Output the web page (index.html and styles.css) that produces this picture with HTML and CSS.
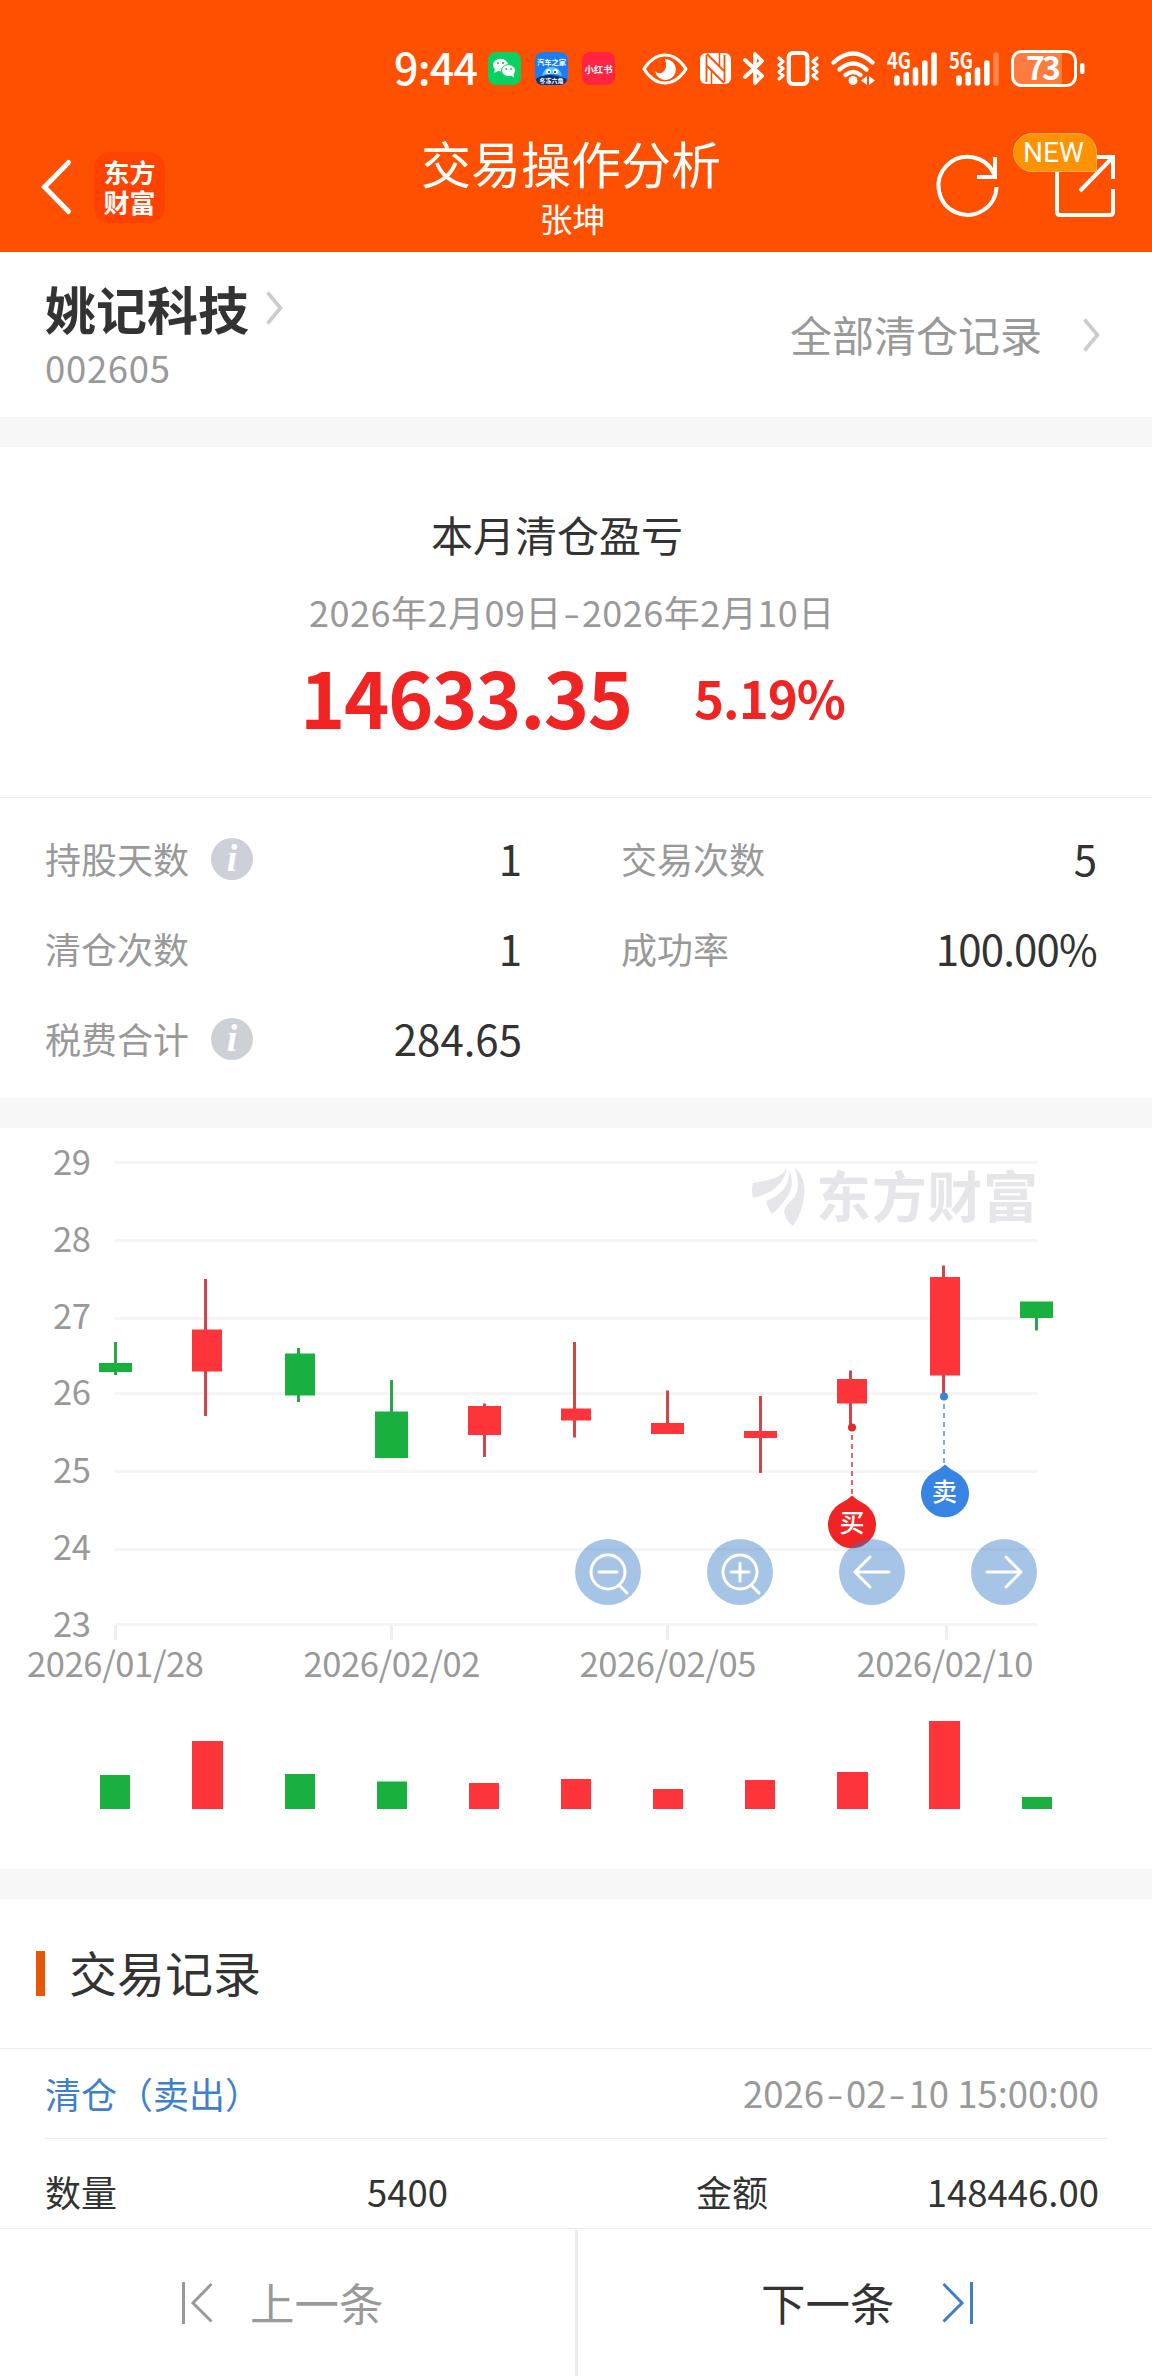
FILE: index.html
```
<!DOCTYPE html>
<html lang="zh-CN">
<head>
  <meta charset="UTF-8" />
  <meta name="viewport" content="width=device-width, initial-scale=1.0"/>
  <title>交易操作分析</title>
  <link rel="stylesheet" href="styles.css">
</head>
<body>

  <header class="header">
    <div class="status-bar">
      <span class="clock">9:44</span>

      <svg class="app-icon" width="33" height="33" viewBox="0 0 33 33">
        <rect width="33" height="33" rx="8" fill="#07d160"/>
        <ellipse cx="12.5" cy="13" rx="7.5" ry="6.3" fill="#fff"/>
        <path d="M7 17l-1 4 4-2z" fill="#fff"/>
        <ellipse cx="20.5" cy="18.6" rx="7" ry="6" fill="#fff" stroke="#07d160"/>
        <path d="M23 23.500l3 2-.5-4z" fill="#fff"/>
        <g fill="#07c160"><circle cx="10" cy="11" r="1"/><circle cx="15" cy="11" r="1"/><circle cx="18.300" cy="17" r=".9"/><circle cx="23" cy="17" r=".9"/></g>
      </svg>

      <svg class="app-icon" width="33" height="33" viewBox="0 0 33 33">
        <rect width="33" height="33" rx="8" fill="#1c7df2"/>
        <path d="M1 27q7-5 15-4t16 4v-1q0 7-8 7H9q-8 0-8-6z" fill="#10306e"/>
        <path d="M7 24q2-9 10-9t10 9q-10-4-20 0z" fill="#62c8fa"/>
        <circle cx="13.500" cy="19.500" r="2.500" fill="#fff"/><circle cx="20.500" cy="19.500" r="2.500" fill="#fff"/>
        <circle cx="14" cy="20" r="1.100" fill="#10306e"/><circle cx="20" cy="20" r="1.100" fill="#10306e"/>
        <text x="16.500" y="12.500" class="app-text" font-size="7.300">汽车之家</text>
        <text x="16.500" y="31" class="app-text" font-size="6">冬冻六角</text>
      </svg>

      <svg class="app-icon" width="33" height="33" viewBox="0 0 33 33">
        <rect width="33" height="33" rx="8" fill="#ff2442"/>
        <text x="16.500" y="20.500" class="app-text" font-size="9.300">小红书</text>
      </svg>

      <!-- eye comfort -->
      <svg class="eye" width="46" height="32" viewBox="0 0 46 32">
        <path d="M2 16Q11 2 23 2t21 14Q35 30 23 30T2 16z" fill="none" stroke="#fff" stroke-width="3.200" stroke-linejoin="round"/>
        <path d="M23 6a10.500 10.500 0 1 1-10 12q4 4 8 1 5-4 2-13z" fill="#fff"/>
      </svg>

      <!-- nfc -->
      <svg class="nfc" width="31" height="31" viewBox="0 0 31 31">
        <rect width="31" height="31" rx="6" fill="#fff"/>
        <path d="M6.500 2v27M24.500 2v27" stroke="#ff5000" stroke-width="1.800"/>
        <path d="M7 1l17 17M7 13l17 17" fill="none" stroke="#ff5000" stroke-width="1.800"/>
        <path d="M11.500 17v14M19.500 0v14" stroke="#ff5000" stroke-width="1.500"/>
      </svg>

      <svg class="bluetooth" width="22" height="35" viewBox="0 0 22 35">
        <path d="M2 9l17 16-7 7V3l7 7L2 26" fill="none" stroke="#fff" stroke-width="3.800" stroke-linecap="round" stroke-linejoin="round"/>
      </svg>

      <svg class="vibrate" width="42" height="35" viewBox="0 0 42 35">
        <rect x="11.800" y="2" width="18.500" height="31" rx="4" fill="none" stroke="#fff" stroke-width="4.200"/>
        <path d="M2 7l4 3.500-4 3.500 4 3.500L2 21l4 3.500L2 28M40 7l-4 3.500 4 3.500-4 3.500 4 3.500-4 3.500 4 3.500" fill="none" stroke="#fff" stroke-width="3.300" stroke-linejoin="round" stroke-linecap="round"/>
      </svg>

      <svg class="wifi" width="44" height="35" viewBox="0 0 44 35">
        <g fill="none" stroke="#fff" stroke-width="4.400" stroke-linecap="round">
          <path d="M2.500 11.500q19.500-18 39 0"/><path d="M8.500 18.500q13.500-12 27 0"/><path d="M14.500 24q7.500-6 15 0"/>
        </g>
        <circle cx="22" cy="29.500" r="4.500" fill="#fff"/>
        <path d="M36 25v9l-6-4.500zM38 25v9l6-4.500z" fill="#fff"/>
      </svg>

      <svg class="signal" width="50" height="35" viewBox="0 0 50 35">
        <text x="0" y="17.500" class="net-text" textLength="24" lengthAdjust="spacingAndGlyphs">4G</text>
        <path d="M10 27v5M19.200 23.500v8.500M28.500 19v13M37.800 12v20M47 4v28" stroke="#fff" stroke-width="5.600" stroke-linecap="round"/>
      </svg>

      <svg class="signal" width="50" height="35" viewBox="0 0 50 35">
        <text x="0" y="17.500" class="net-text" textLength="24" lengthAdjust="spacingAndGlyphs">5G</text>
        <path d="M10 27v5M19.200 23.500v8.500M28.500 19v13M37.800 12v20" stroke="#fff" stroke-width="5.600" stroke-linecap="round"/>
        <path d="M47 4v28" stroke="#fff" stroke-opacity=".3" stroke-width="5.600" stroke-linecap="round"/>
      </svg>

      <svg class="battery" width="74" height="37" viewBox="0 0 74 37">
        <path d="M10 3h41v31H10q-7 0-7-7V10q0-7 7-7z" fill="#fff" fill-opacity=".25"/>
        <rect x="1.500" y="1.500" width="63" height="34" rx="9" fill="none" stroke="#fff" stroke-width="3"/>
        <rect x="69" y="13" width="4.500" height="11" rx="2" fill="#fff"/>
        <text x="32.500" y="30" class="battery-text" textLength="35">73</text>
      </svg>
    </div>

    <nav class="nav-bar">
      <div class="nav-left">
        <svg width="30" height="54" viewBox="0 0 30 54"><path d="M27.500 2.500L3.500 27l24 24.500" fill="none" stroke="#fff" stroke-width="5" stroke-linecap="round"/></svg>
        <div class="logo"><span>东方</span><span>财富</span></div>
      </div>
      <div class="nav-title">
        <h1>交易操作分析</h1>
        <p>张坤</p>
      </div>
      <div class="nav-right">
        <svg width="62" height="62" viewBox="0 0 62 62">
          <path d="M58 2V22H40" fill="none" stroke="#fff" stroke-width="4"/>
          <path d="M57 19A29 29 0 1 0 59.500 32" fill="none" stroke="#fff" stroke-width="4"/>
        </svg>
        <div class="share">
          <svg width="62" height="62" viewBox="0 0 62 62">
            <path d="M22 2H59V24M59 34V57q0 3-3 3H6q-3 0-3-3V10" fill="none" stroke="#fff" stroke-width="4"/>
            <path d="M26 36L58 3" stroke="#fff" stroke-width="4"/>
          </svg>
          <span class="badge">NEW</span>
        </div>
      </div>
    </nav>
  </header>

  <section class="stock">
    <div class="stock-info">
      <h2>姚记科技
        <svg width="17" height="34" viewBox="0 0 17 34"><path d="M1.500 1.500L14.500 17 1.500 32.500" fill="none" stroke="#ccc" stroke-width="3.600"/></svg>
      </h2>
      <p>002605</p>
    </div>
    <a class="all-records"><span>全部清仓记录</span>
      <svg width="17" height="34" viewBox="0 0 17 34"><path d="M1.500 1.500L14.500 17 1.500 32.500" fill="none" stroke="#ccc" stroke-width="3.600"/></svg>
    </a>
  </section>

  <section class="profit">
    <h3>本月清仓盈亏</h3>
    <p class="period">2026年2月09日<i class="dash">-</i>2026年2月10日</p>
    <div class="amount"><strong>14633.35</strong><b>5.19%</b></div>
  </section>

  <section class="stats">
    <div class="stat"><label>持股天数</label><i class="info">i</i><span>1</span></div>
    <div class="stat"><label>交易次数</label><span>5</span></div>
    <div class="stat"><label>清仓次数</label><span>1</span></div>
    <div class="stat"><label>成功率</label><span class="rate">100.00%</span></div>
    <div class="stat"><label>税费合计</label><i class="info">i</i><span>284.65</span></div>
  </section>

  <section class="chart">
    <svg width="1152" height="741" viewBox="0 0 1152 741">
      <!-- grid -->
      <path d="M115 34.500H1037M115 112.500H1037M115 190.500H1037M115 265.500H1037M115 343.500H1037M115 421.500H1037M115 496.500H1037" stroke="#f5f5f5" stroke-width="3"/>
      <path d="M115.500 497v15M391.500 497v15M667.500 497v15M946.500 497v15" stroke="#eee" stroke-width="3"/>

      <!-- price axis -->
      <g class="axis">
        <text x="53" y="46.500" textLength="38">29</text>
        <text x="53" y="123.500" textLength="38">28</text>
        <text x="53" y="200.500" textLength="38">27</text>
        <text x="53" y="277" textLength="38">26</text>
        <text x="53" y="354.500" textLength="38">25</text>
        <text x="53" y="431.500" textLength="38">24</text>
        <text x="53" y="509" textLength="38">23</text>
        <text x="27" y="549" textLength="177">2026/01/28</text>
        <text x="303.500" y="549" textLength="177">2026/02/02</text>
        <text x="579.500" y="549" textLength="177">2026/02/05</text>
        <text x="856.500" y="549" textLength="177">2026/02/10</text>
      </g>

      <!-- watermark -->
      <g fill="#e6e5ea">
        <path d="M787 39q-4 12-34 16-2 7 0 15 30-7 34-30z"/>
        <path d="M789.500 42q6 18-4 29-6 9-13.500 15-5-7-6-13 24-9 23.500-31z"/>
        <path d="M794.500 39q11 11 10 25-1.500 20-11.500 34-8-6-9-15 1-5 9-12 9-11 1.500-32z"/>
        <text x="816" y="89" class="watermark" textLength="222">东方财富</text>
      </g>

      <!-- candles -->
      <g class="up">
        <path d="M205.500 151v137M484.500 275.500v53.500M574.500 214v95.500M667.500 262.500v40M760.500 268v77M850.500 242.500v57M943.500 137.500v130"/>
        <rect x="192" y="201.500" width="30" height="42"/>
        <rect x="468" y="278" width="33" height="29"/>
        <rect x="561" y="280.500" width="30" height="12"/>
        <rect x="651" y="295" width="33" height="11"/>
        <rect x="744" y="303" width="33" height="7"/>
        <rect x="837" y="251" width="30" height="24.500"/>
        <rect x="930" y="149" width="30" height="98.500"/>
      </g>
      <g class="down">
        <path d="M115.500 214v33M298.500 220v54M391.500 252v60M1036.500 180v22.500"/>
        <rect x="99" y="235" width="33" height="9"/>
        <rect x="285" y="225.500" width="30" height="42"/>
        <rect x="375" y="283.500" width="33" height="46.500"/>
        <rect x="1020" y="173.500" width="33" height="16.500"/>
      </g>

      <!-- buy / sell marks -->
      <path d="M852 307v62" stroke="#e04040" stroke-width="1.600" stroke-dasharray="5 4"/>
      <circle cx="852" cy="299.500" r="4" fill="#e02a2a"/>
      <path d="M852 367.500q5 5 13 8.700a24 24 0 1 1-26 0q8-3.700 13-8.700z" fill="#f12323"/>
      <text x="852" y="404" class="mark">买</text>
      <path d="M944 276v60" stroke="#5a98d8" stroke-width="1.600" stroke-dasharray="5 4"/>
      <circle cx="944" cy="268.500" r="4" fill="#3a82e0"/>
      <path d="M945 336.500q5 5 13 8.700a24 24 0 1 1-26 0q8-3.700 13-8.700z" fill="#3884e2"/>
      <text x="944.500" y="373" class="mark">卖</text>

      <!-- chart controls -->
      <g class="controls">
        <circle cx="608" cy="444" r="33"/><circle cx="740" cy="444" r="33"/><circle cx="872" cy="444" r="33"/><circle cx="1004" cy="444" r="33"/>
        <path d="M599 444h18M619 457l8 8"/><path d="M731 444h18M740 435v18M751 457l8 8"/>
        <circle class="lens" cx="608" cy="444" r="17"/><circle class="lens" cx="740" cy="444" r="17"/>
        <path d="M889 444h-34M870 429l-15 15 15 15M987 444h34M1006 429l15 15-15 15"/>
      </g>

      <!-- volume -->
      <g class="up">
        <rect x="192" y="613" width="31" height="68"/>
        <rect x="469" y="655" width="30" height="26"/>
        <rect x="561" y="651" width="30" height="30"/>
        <rect x="653" y="661" width="30" height="20"/>
        <rect x="745" y="652" width="30" height="29"/>
        <rect x="837" y="644" width="31" height="37"/>
        <rect x="929" y="593" width="31" height="88"/>
      </g>
      <g class="down">
        <rect x="100" y="647" width="30" height="34"/>
        <rect x="285" y="646" width="30" height="35"/>
        <rect x="377" y="653.500" width="30" height="27.500"/>
        <rect x="1022" y="669" width="30" height="12"/>
      </g>
    </svg>
  </section>

  <section class="records">
    <h3>交易记录</h3>
    <div class="record-head"><span class="sell">清仓（卖出）</span><span class="time">2026<i class="dash">-</i>02<i class="dash">-</i>10 15:00:00</span></div>
    <div class="record-row">
      <label>数量</label><span>5400</span>
      <label class="money">金额</label><span>148446.00</span>
    </div>
  </section>

  <footer class="pager">
    <a class="prev">
      <svg width="31" height="42" viewBox="0 0 31 42"><path d="M1.500 0v42M29.500 2L11 21l18.500 18.500" fill="none" stroke="#999" stroke-width="3"/></svg>
      <span>上一条</span>
    </a>
    <a class="next">
      <span>下一条</span>
      <svg width="31" height="42" viewBox="0 0 31 42"><path d="M29.500 0v42M1.500 2L20 21 1.500 39.500" fill="none" stroke="#3f7fc8" stroke-width="3"/></svg>
    </a>
  </footer>

</body>
</html>
```
FILE: styles.css
```
/* Reset and Base Styles */
* {
  margin: 0;
  padding: 0;
  box-sizing: border-box;
}

body {
  width: 1152px;
  background: #fff;
  color: #333;
  font-family: 'Noto Sans CJK SC', 'Noto Sans', sans-serif;
  font-size: 36px;
}

h1, h2, h3 {
  font-weight: 400;
}

svg {
  display: block;
  flex-shrink: 0;
  overflow: visible;
}

.dash {
  display: inline-block;
  width: 20px;
  font-style: normal;
  text-align: center;
  transform: scaleX(1.35);
}

/* Header */
.header {
  height: 252px;
  background: #ff5000;
  color: #fff;
}

.status-bar {
  display: flex;
  align-items: center;
  height: 104px;
  padding: 33px 0 0 394px;
}

.clock {
  width: 94px;
  font-size: 43px;
  font-weight: 500;
  line-height: 60px;
  letter-spacing: -0.8px;
  margin-top: -6px;
}

.app-icon {
  margin-right: 14px;
}

.app-text {
  fill: #fff;
  font-weight: 700;
  text-anchor: middle;
}

.eye {
  margin-left: 13px;
}

.nfc,
.bluetooth,
.vibrate,
.wifi,
.signal,
.battery {
  margin-left: 12px;
}

.net-text {
  fill: #fff;
  font-size: 22px;
  font-weight: 700;
}

.battery-text {
  fill: #fff;
  font-size: 32px;
  font-weight: 700;
  text-anchor: middle;
}

.nav-bar {
  display: grid;
  grid-template-columns: 421px 300px 1fr;
  height: 148px;
}

.nav-left {
  display: flex;
  align-items: center;
  height: 148px;
  padding: 18px 0 0 41px;
}

.logo {
  display: flex;
  flex-direction: column;
  align-items: center;
  width: 71px;
  height: 71px;
  margin-left: 23px;
  padding-top: 5px;
  border-radius: 16px;
  background: #ff4200;
  font-size: 26px;
  font-weight: 700;
  line-height: 30px;
}

.nav-title {
  padding-top: 28px;
  text-align: center;
}

.nav-title h1 {
  font-size: 50px;
  line-height: 60px;
}

.nav-title p {
  margin-top: 6px;
  padding-left: 3px;
  font-size: 33px;
  line-height: 40px;
}

.nav-right {
  display: flex;
  gap: 55px;
  padding: 51px 0 0 216px;
}

.share {
  position: relative;
}

.badge {
  position: absolute;
  left: -41px;
  top: -22px;
  width: 84px;
  height: 39px;
  padding-left: 9px;
  border: 1px solid #ffb060;
  border-radius: 20px 20px 0 20px;
  background: #ff9200;
  font-family: Roboto, sans-serif;
  font-size: 28px;
  line-height: 38px;
}

/* Stock name */
.stock {
  display: flex;
  justify-content: space-between;
  height: 195px;
  padding: 23px 52px 0 45px;
  border-bottom: 30px solid #f7f7f7;
}

.stock h2 {
  display: flex;
  align-items: center;
  gap: 17px;
  font-size: 51px;
  font-weight: 700;
  line-height: 66px;
}

.stock p {
  margin-top: 3px;
  color: #999;
  font-size: 36.5px;
  line-height: 48px;
  letter-spacing: 0.7px;
}

.all-records {
  display: flex;
  align-items: center;
  gap: 41px;
  height: 120px;
  color: #999;
  font-size: 42px;
}

.all-records span {
  margin-top: -4px;
}

/* Profit */
.profit {
  height: 351px;
  padding-top: 57px;
  border-bottom: 1px solid #ebebeb;
}

.profit h3 {
  padding-left: 431px;
  font-size: 42px;
  line-height: 60px;
}

.period {
  margin-top: 20px;
  padding-left: 309px;
  color: #999;
  font-size: 36px;
  line-height: 54px;
  letter-spacing: 0.5px;
}

.amount {
  display: flex;
  align-items: center;
  margin-top: 6px;
  padding-left: 300px;
  color: #f12424;
  line-height: 100px;
}

.amount strong {
  width: 394px;
  font-size: 77px;
  letter-spacing: -1.4px;
}

.amount b {
  padding-top: 3px;
  font-size: 51px;
  letter-spacing: -1px;
}

/* Stats */
.stats {
  display: grid;
  grid-template-columns: 477px 476px;
  column-gap: 99px;
  align-content: start;
  height: 330px;
  padding: 16px 0 0 45px;
  border-bottom: 30px solid #f7f7f7;
}

.stat {
  display: flex;
  align-items: center;
  height: 90px;
}

.stat label {
  margin-top: -3px;
  color: #999;
  font-size: 36px;
}

.stat span {
  margin-top: -4px;
  margin-left: auto;
  font-size: 42px;
}

.stat .rate {
  letter-spacing: -0.8px;
}

.info {
  width: 42px;
  height: 42px;
  margin-left: 22px;
  border-radius: 50%;
  background: #cdd0d6;
  color: #fff;
  font: italic bold 38px/40px 'Liberation Serif', serif;
  text-align: center;
}

/* Chart */
.chart {
  height: 771px;
  border-bottom: 30px solid #f7f7f7;
}

.axis {
  fill: #999;
  font-size: 34.5px;
}

.up {
  fill: #fd353a;
}

.down {
  fill: #1ab040;
}

.up path {
  stroke: #d0464a;
  stroke-width: 3;
}

.down path {
  stroke: #2fa24e;
  stroke-width: 3;
}

.watermark {
  font-size: 55px;
  font-weight: 700;
}

.mark {
  fill: #fff;
  font-size: 25px;
  font-weight: 500;
  text-anchor: middle;
}

.controls circle {
  fill: #3279c6;
  fill-opacity: 0.44;
}

.controls path,
.controls .lens {
  fill: none;
  stroke: #fff;
  stroke-width: 3;
  stroke-linecap: round;
}

/* Records */
.records {
  height: 330px;
  border-bottom: 1px solid #ebebeb;
}

.records h3 {
  display: flex;
  align-items: center;
  height: 150px;
  padding: 0 0 5px 36px;
  border-bottom: 1px solid #ebebeb;
  font-size: 48px;
}

.records h3::before {
  content: "";
  width: 9px;
  height: 45px;
  margin: 4px 24px 0 0;
  background: #e65808;
}

.record-head {
  display: flex;
  justify-content: space-between;
  align-items: center;
  height: 90px;
  margin: 0 45px;
  padding: 0 8px 2px 0;
  border-bottom: 1px solid #ebebeb;
}

.sell {
  color: #3f80cc;
}

.time {
  color: #999;
  font-size: 36.5px;
}

.time .dash {
  width: 22px;
}

.record-row {
  display: grid;
  grid-template-columns: 200px 203px 248px 1fr;
  align-items: center;
  height: 89px;
  padding: 15px 53px 0 45px;
}

.record-row span {
  font-size: 36.5px;
  text-align: right;
}

.record-row .money {
  width: 320px;
  padding-left: 248px;
}

/* Bottom pager */
.pager {
  display: grid;
  grid-template-columns: 578px 574px;
  height: 147px;
  font-size: 44.5px;
}

.pager a {
  display: flex;
  align-items: center;
  margin-top: 1px;
}

.pager span {
  margin-top: -4px;
}

.prev {
  gap: 37px;
  padding-left: 182px;
  border-right: 3px solid #ececec;
  color: #999;
}

.next {
  gap: 47px;
  padding-left: 183px;
}
```
